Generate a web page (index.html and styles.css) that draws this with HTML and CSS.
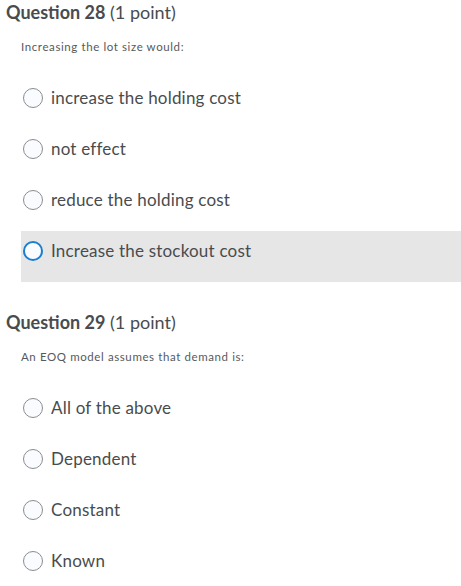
FILE: index.html
```html
<!DOCTYPE html>
<html>
<head>
<meta charset="utf-8">
<link rel="stylesheet" href="styles.css">
</head>
<body>
<section class="question">
  <h2 class="q-title"><strong>Question 28</strong> (1 point)</h2>
  <p class="q-text">Increasing the lot size would:</p>
  <ul class="options">
    <li class="option"><span class="radio"></span><span class="label">increase the holding cost</span></li>
    <li class="option"><span class="radio"></span><span class="label">not effect</span></li>
    <li class="option"><span class="radio"></span><span class="label">reduce the holding cost</span></li>
    <li class="option hover"><span class="radio focus"></span><span class="label">Increase the stockout cost</span></li>
  </ul>
</section>
<section class="question second">
  <h2 class="q-title"><strong>Question 29</strong> (1 point)</h2>
  <p class="q-text">An EOQ model assumes that demand is:</p>
  <ul class="options">
    <li class="option"><span class="radio"></span><span class="label">All of the above</span></li>
    <li class="option"><span class="radio"></span><span class="label">Dependent</span></li>
    <li class="option"><span class="radio"></span><span class="label">Constant</span></li>
    <li class="option"><span class="radio"></span><span class="label">Known</span></li>
  </ul>
</section>
</body>
</html>
```
FILE: styles.css
```css
html, body {
  margin: 0;
  padding: 0;
  background: #ffffff;
}
body {
  font-family: Lato, "Open Sans", sans-serif;
  color: #494c4e;
  overflow: hidden;
}
.question {
  display: flex;
  flex-direction: column;
}
.second {
  margin-top: 28px;
}
.q-title {
  margin: 0;
  padding-left: 6px;
  font-size: 18px;
  line-height: 24px;
  font-weight: 400;
  color: #494c4e;
}
.q-title strong {
  font-weight: 700;
}
.q-text {
  margin: 15px 0 0 21px;
  font-size: 11.5px;
  letter-spacing: 0.6px;
  line-height: 16px;
  color: #565a5c;
}
.options {
  list-style: none;
  margin: 23px 0 0 21px;
  padding: 0;
}
.option {
  height: 51px;
  box-sizing: border-box;
  padding: 10px 0 0 2px;
  display: flex;
  align-items: flex-start;
  gap: 8px;
}
.option.hover {
  background: #e6e6e6;
}
.radio {
  width: 20px;
  height: 20px;
  box-sizing: border-box;
  border-radius: 50%;
  border: 1px solid #8a8d8f;
  background: #f9fbff;
  flex: none;
}
.radio.focus {
  border: 2px solid #1a7fd0;
}
.label {
  font-size: 17px;
  letter-spacing: 0.2px;
  line-height: 20px;
  color: #494c4e;
}
```
